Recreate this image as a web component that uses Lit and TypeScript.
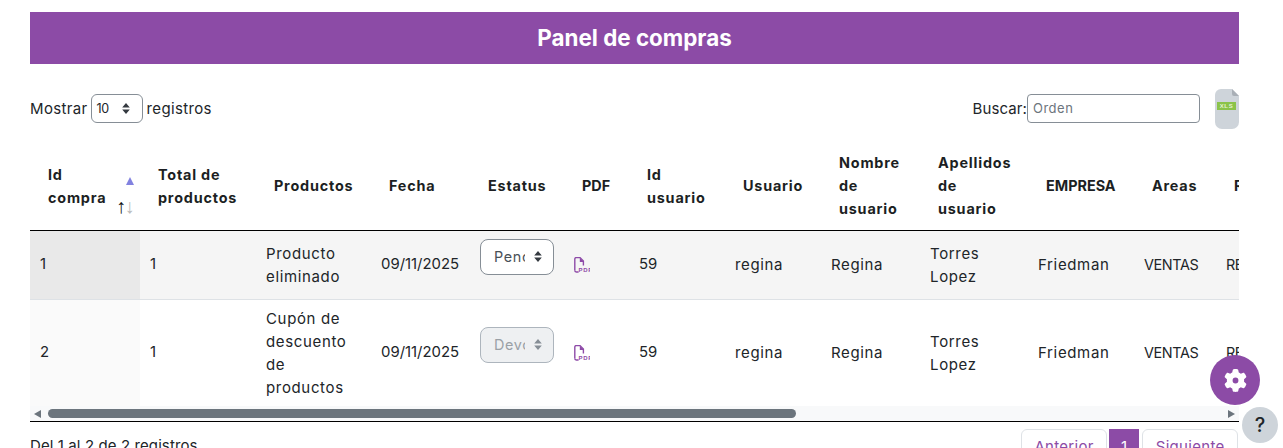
import { LitElement, html, css, svg } from "lit";
import { customElement } from "lit/decorators.js";

const WIDTHS = [110, 116, 115, 99, 94, 65, 96, 96, 99, 108, 106, 82, 120];
const GEAR =
  "M495.9 166.6c3.2 8.7 .5 18.4-6.4 24.6l-43.3 39.4c1.1 8.3 1.7 16.8 1.7 25.4s-.6 17.1-1.7 25.4l43.3 39.4c6.9 6.2 9.6 15.9 6.4 24.6c-4.4 11.9-9.7 23.3-15.8 34.3l-4.7 8.1c-6.6 11-14 21.4-22.1 31.2c-5.9 7.2-15.7 9.6-24.5 6.8l-55.7-17.7c-13.4 10.3-28.2 18.9-44 25.4l-12.5 57.1c-2 9.1-9 16.3-18.2 17.8c-13.8 2.3-28 3.5-42.5 3.5s-28.7-1.2-42.5-3.5c-9.2-1.5-16.2-8.7-18.2-17.8l-12.5-57.1c-15.8-6.5-30.6-15.1-44-25.4L83.1 425.9c-8.8 2.8-18.6 .3-24.5-6.8c-8.1-9.8-15.5-20.2-22.1-31.2l-4.7-8.1c-6.1-11-11.4-22.4-15.8-34.3c-3.2-8.7-.5-18.4 6.4-24.6l43.3-39.4C64.6 273.1 64 264.6 64 256s.6-17.1 1.7-25.4L22.4 191.2c-6.9-6.2-9.6-15.9-6.4-24.6c4.4-11.9 9.7-23.3 15.8-34.3l4.7-8.1c6.6-11 14-21.4 22.1-31.2c5.9-7.2 15.7-9.6 24.5-6.8l55.7 17.7c13.4-10.3 28.2-18.9 44-25.4l12.5-57.1c2-9.1 9-16.3 18.2-17.8C227.3 1.2 241.5 0 256 0s28.7 1.2 42.5 3.5c9.2 1.5 16.2 8.7 18.2 17.8l12.5 57.1c15.8 6.5 30.6 15.1 44 25.4l55.7-17.7c8.8-2.8 18.6-.3 24.5 6.8c8.1 9.8 15.5 20.2 22.1 31.2l4.7 8.1c6.1 11 11.4 22.4 15.8 34.3zM256 321a65 65 0 1 0 0-130 65 65 0 1 0 0 130z";

const HEADERS = [
  "Id compra", "Total de productos", "Productos", "Fecha", "Estatus", "PDF", "Id usuario",
  "Usuario", "Nombre de usuario", "Apellidos de usuario", "EMPRESA", "Areas", "Rol",
];

const updown = () => svg`<svg class="updown" viewBox="0 0 8 11" width="8" height="11"><path d="M4 0 7.8 4.4H.2zM4 11 .2 6.6h7.6z" fill="#343a40"/></svg>`;
const pdf = () => svg`<svg class="pdf" viewBox="0 0 16 16" width="16" height="16">
  <path d="M.8 13.6V2C.8 1.2 1.4.6 2.2.6H6L9.4 4V8.6" fill="none" stroke="#8e4ba8" stroke-width="1.4"/>
  <path d="M5.8 .8L9.4 4.4V5H5.8z" fill="#8e4ba8"/>
  <path d="M.8 13.6c0 .8.6 1.4 1.4 1.4H4.6" fill="none" stroke="#8e4ba8" stroke-width="1.4"/>
  <text x="4.6" y="15.2" font-size="6" font-weight="700" font-family="Liberation Sans, sans-serif" fill="#8e4ba8">PDF</text>
</svg>`;

@customElement("app-root")
export class AppRoot extends LitElement {
  static styles = css`
    :host {
      display: block;
      position: relative;
      height: 448px;
      overflow: hidden;
      background: #fff;
      font-family: Inter, "Open Sans", sans-serif;
      font-size: 15px;
      line-height: 23px;
      color: #212529;
      letter-spacing: 0.65px;
    }
    .page { padding: 12px 44px 0 30px; }
    .title {
      height: 52px;
      box-sizing: border-box;
      padding-bottom: 2px;
      background: #8c4ba6;
      color: #fff;
      font-size: 22.4px;
      font-weight: 700;
      letter-spacing: 0;
      display: flex;
      align-items: center;
      justify-content: center;
    }
    .toolbar {
      display: flex;
      align-items: flex-start;
      justify-content: space-between;
      box-sizing: border-box;
      height: 76px;
      padding-top: 25px;
    }
    .len { display: flex; align-items: center; height: 29px; margin-top: 5px; letter-spacing: 0.35px; }
    .fake {
      display: flex;
      align-items: center;
      background: #fff;
      border: 1px solid #868e96;
      border-radius: 6px;
      box-sizing: border-box;
    }
    .len-select { width: 52px; height: 29px; margin: 0 4px 0 3px; padding: 0 12px 0 5px; justify-content: space-between; font-size: 12.5px; letter-spacing: -0.4px; }
    .right { display: flex; align-items: flex-start; }
    .search { display: flex; align-items: center; height: 29px; margin-top: 5px; letter-spacing: 0.1px; }
    .search-box {
      width: 173px; height: 29px; margin-right: 15px; padding-left: 5px;
      border-radius: 4px; color: #6c757d; font-size: 13px; letter-spacing: .5px;
    }
    .xls { display: block; }
    .wrap { overflow: hidden; }
    table { border-collapse: collapse; table-layout: fixed; width: 1210px; }
    th {
      height: 90px;
      padding: 2px 8px 0 18px;
      box-sizing: border-box;
      text-align: left;
      font-size: 14.4px;
      font-weight: 700;
      letter-spacing: 0.8px;
      vertical-align: middle;
      border-bottom: 1px solid #000;
      position: relative;
      color: #1c1f23;
    }
    th.first { padding-right: 30px; }
    th.caps { letter-spacing: 0; }
    td {
      padding: 0 10px;
      box-sizing: border-box;
      vertical-align: middle;
      border-bottom: 1px solid #dee2e6;
    }
    td.num { letter-spacing: 0; font-size: 14.9px; }
    td.caps { letter-spacing: -0.4px; font-size: 14.4px; }
    tr.a td { height: 69px; background: #f5f5f5; }
    tr.b td { height: 107px; background: #fff; border-bottom: 0; }
    tr.a td.sorted { background: #e9e9e9; }
    tr.b td.sorted { background: #fafafa; }
    .tri {
      position: absolute; left: 96px; top: 37px; width: 0; height: 0;
      border-left: 4.5px solid transparent; border-right: 4.5px solid transparent;
      border-bottom: 8px solid #8282e0;
    }
    .arrows { position: absolute; left: 86px; top: 55px; font-size: 20px; letter-spacing: -1.5px; font-weight: 400; font-family: "Liberation Sans", sans-serif; color: #111; }
    .arrows i { font-style: normal; color: #bbb; }
    .cell-select { width: 74px; height: 36px; padding: 0 12px 0 13px; border-radius: 8px; margin-bottom: 16px; }
    .cell-select span { width: 31px; margin-right: 9px; overflow: hidden; white-space: nowrap; flex: none; color: #495057; font-size: 14.4px; }
    .cell-select .updown { flex: none; }
    .cell-select.off { background: #eef0f2; border-color: #adb5bd; }
    .cell-select.off span { color: #9aa0a6; }
    .cell-select.off .updown path { fill: #868e96; }
    .pdf { display: block; }
    .scroll {
      display: flex; align-items: center; height: 15px;
      background: #f8f9fa;
      padding: 0 4px;
    }
    .arrow-l { width: 0; height: 0; border-top: 4.5px solid transparent; border-bottom: 4.5px solid transparent; border-right: 7px solid #6c757d; margin-right: 7px; }
    .arrow-r { width: 0; height: 0; border-top: 4.5px solid transparent; border-bottom: 4.5px solid transparent; border-left: 7px solid #6c757d; margin-left: auto; }
    .thumb { width: 748px; height: 9px; background: #6c757d; border-radius: 5px; }
    .rule { height: 1px; background: #000; }
    .foot { display: flex; justify-content: space-between; align-items: flex-start; padding-top: 7px; }
    .info { padding-top: 5px; letter-spacing: 0.1px; }
    .pager { display: flex; gap: 2px; margin-right: 1px; letter-spacing: 0.3px; }
    .pg {
      height: 34px; padding: 0 12.5px; display: flex; align-items: center; box-sizing: border-box;
      border: 1px solid #dee2e6; border-radius: 6px; color: #8c4ba6;
    }
    .pg.on { width: 30px; padding: 0; justify-content: center; background: #8c4ba6; color: #fff; border-color: #8c4ba6; border-radius: 0; margin-right: 1px; }
    .fab {
      position: absolute; left: 1210px; top: 355px; width: 50px; height: 50px; border-radius: 50%;
      background: #8c4ba6; display: flex; align-items: center; justify-content: center;
    }
    .help {
      position: absolute; left: 1242px; top: 407px; width: 36px; height: 36px; border-radius: 50%;
      background: #ced4da; display: flex; align-items: center; justify-content: center;
      font-size: 20px; font-weight: 500; color: #212529; letter-spacing: 0;
    }
  `;

  private select(label: string, off = false) {
    return html`<div class="fake cell-select ${off ? "off" : ""}"><span>${label}</span>${updown()}</div>`;
  }

  private row(cls: string, id: string, prod: unknown, sel: unknown) {
    return html`<tr class=${cls}>
      <td class="sorted num">${id}</td><td class="num">1</td><td>${prod}</td><td class="num">09/11/2025</td>
      <td>${sel}</td><td>${pdf()}</td><td class="num">59</td><td>regina</td><td>Regina</td>
      <td>Torres Lopez</td><td>Friedman</td><td class="caps">VENTAS</td><td class="caps">REGINA</td>
    </tr>`;
  }

  render() {
    return html`
      <div class="page">
        <div class="title">Panel de compras</div>
        <div class="toolbar">
          <div class="len">Mostrar<div class="fake len-select"><span>10</span>${updown()}</div>registros</div>
          <div class="right">
            <div class="search">Buscar:<div class="fake search-box">Orden</div></div>
            <svg class="xls" viewBox="0 0 24 40" width="24" height="40">
              <path d="M6 0H17L24 7V33a7 7 0 0 1-7 7H7a7 7 0 0 1-7-7V6a6 6 0 0 1 6-6z" fill="#ced4da"/>
              <path d="M17 0L24 7H19a2 2 0 0 1-2-2z" fill="#a9afb6"/>
              <rect x="2" y="13" width="19" height="8" fill="#8bc34a"/>
              <text x="11.5" y="19.2" text-anchor="middle" font-size="6" font-weight="700" font-family="Liberation Sans, sans-serif" fill="#e4f2d3">XLS</text>
            </svg>
          </div>
        </div>
        <div class="wrap">
          <table>
            <colgroup>${WIDTHS.map((w) => html`<col style="width:${w}px" />`)}</colgroup>
            <thead><tr>
              ${HEADERS.map((h, i) => html`<th class="${i === 0 ? "first" : ""} ${h === "EMPRESA" || h === "PDF" ? "caps" : ""}">${h}${i === 0 ? html`<span class="tri"></span><span class="arrows">↑<i>↓</i></span>` : ""}</th>`)}
            </tr></thead>
            <tbody>
              ${this.row("a", "1", "Producto eliminado", this.select("Pendiente"))}
              ${this.row("b", "2", "Cupón de descuento de productos", this.select("Devolución", true))}
            </tbody>
          </table>
          <div class="scroll"><span class="arrow-l"></span><span class="thumb"></span><span class="arrow-r"></span></div>
          <div class="rule"></div>
        </div>
        <div class="foot">
          <div class="info">Del 1 al 2 de 2 registros</div>
          <div class="pager"><div class="pg">Anterior</div><div class="pg on">1</div><div class="pg">Siguiente</div></div>
        </div>
      </div>
      <div class="fab"><svg viewBox="0 0 512 512" width="23" height="23"><path d=${GEAR} fill="#fff"/></svg></div>
      <div class="help">?</div>
    `;
  }
}
